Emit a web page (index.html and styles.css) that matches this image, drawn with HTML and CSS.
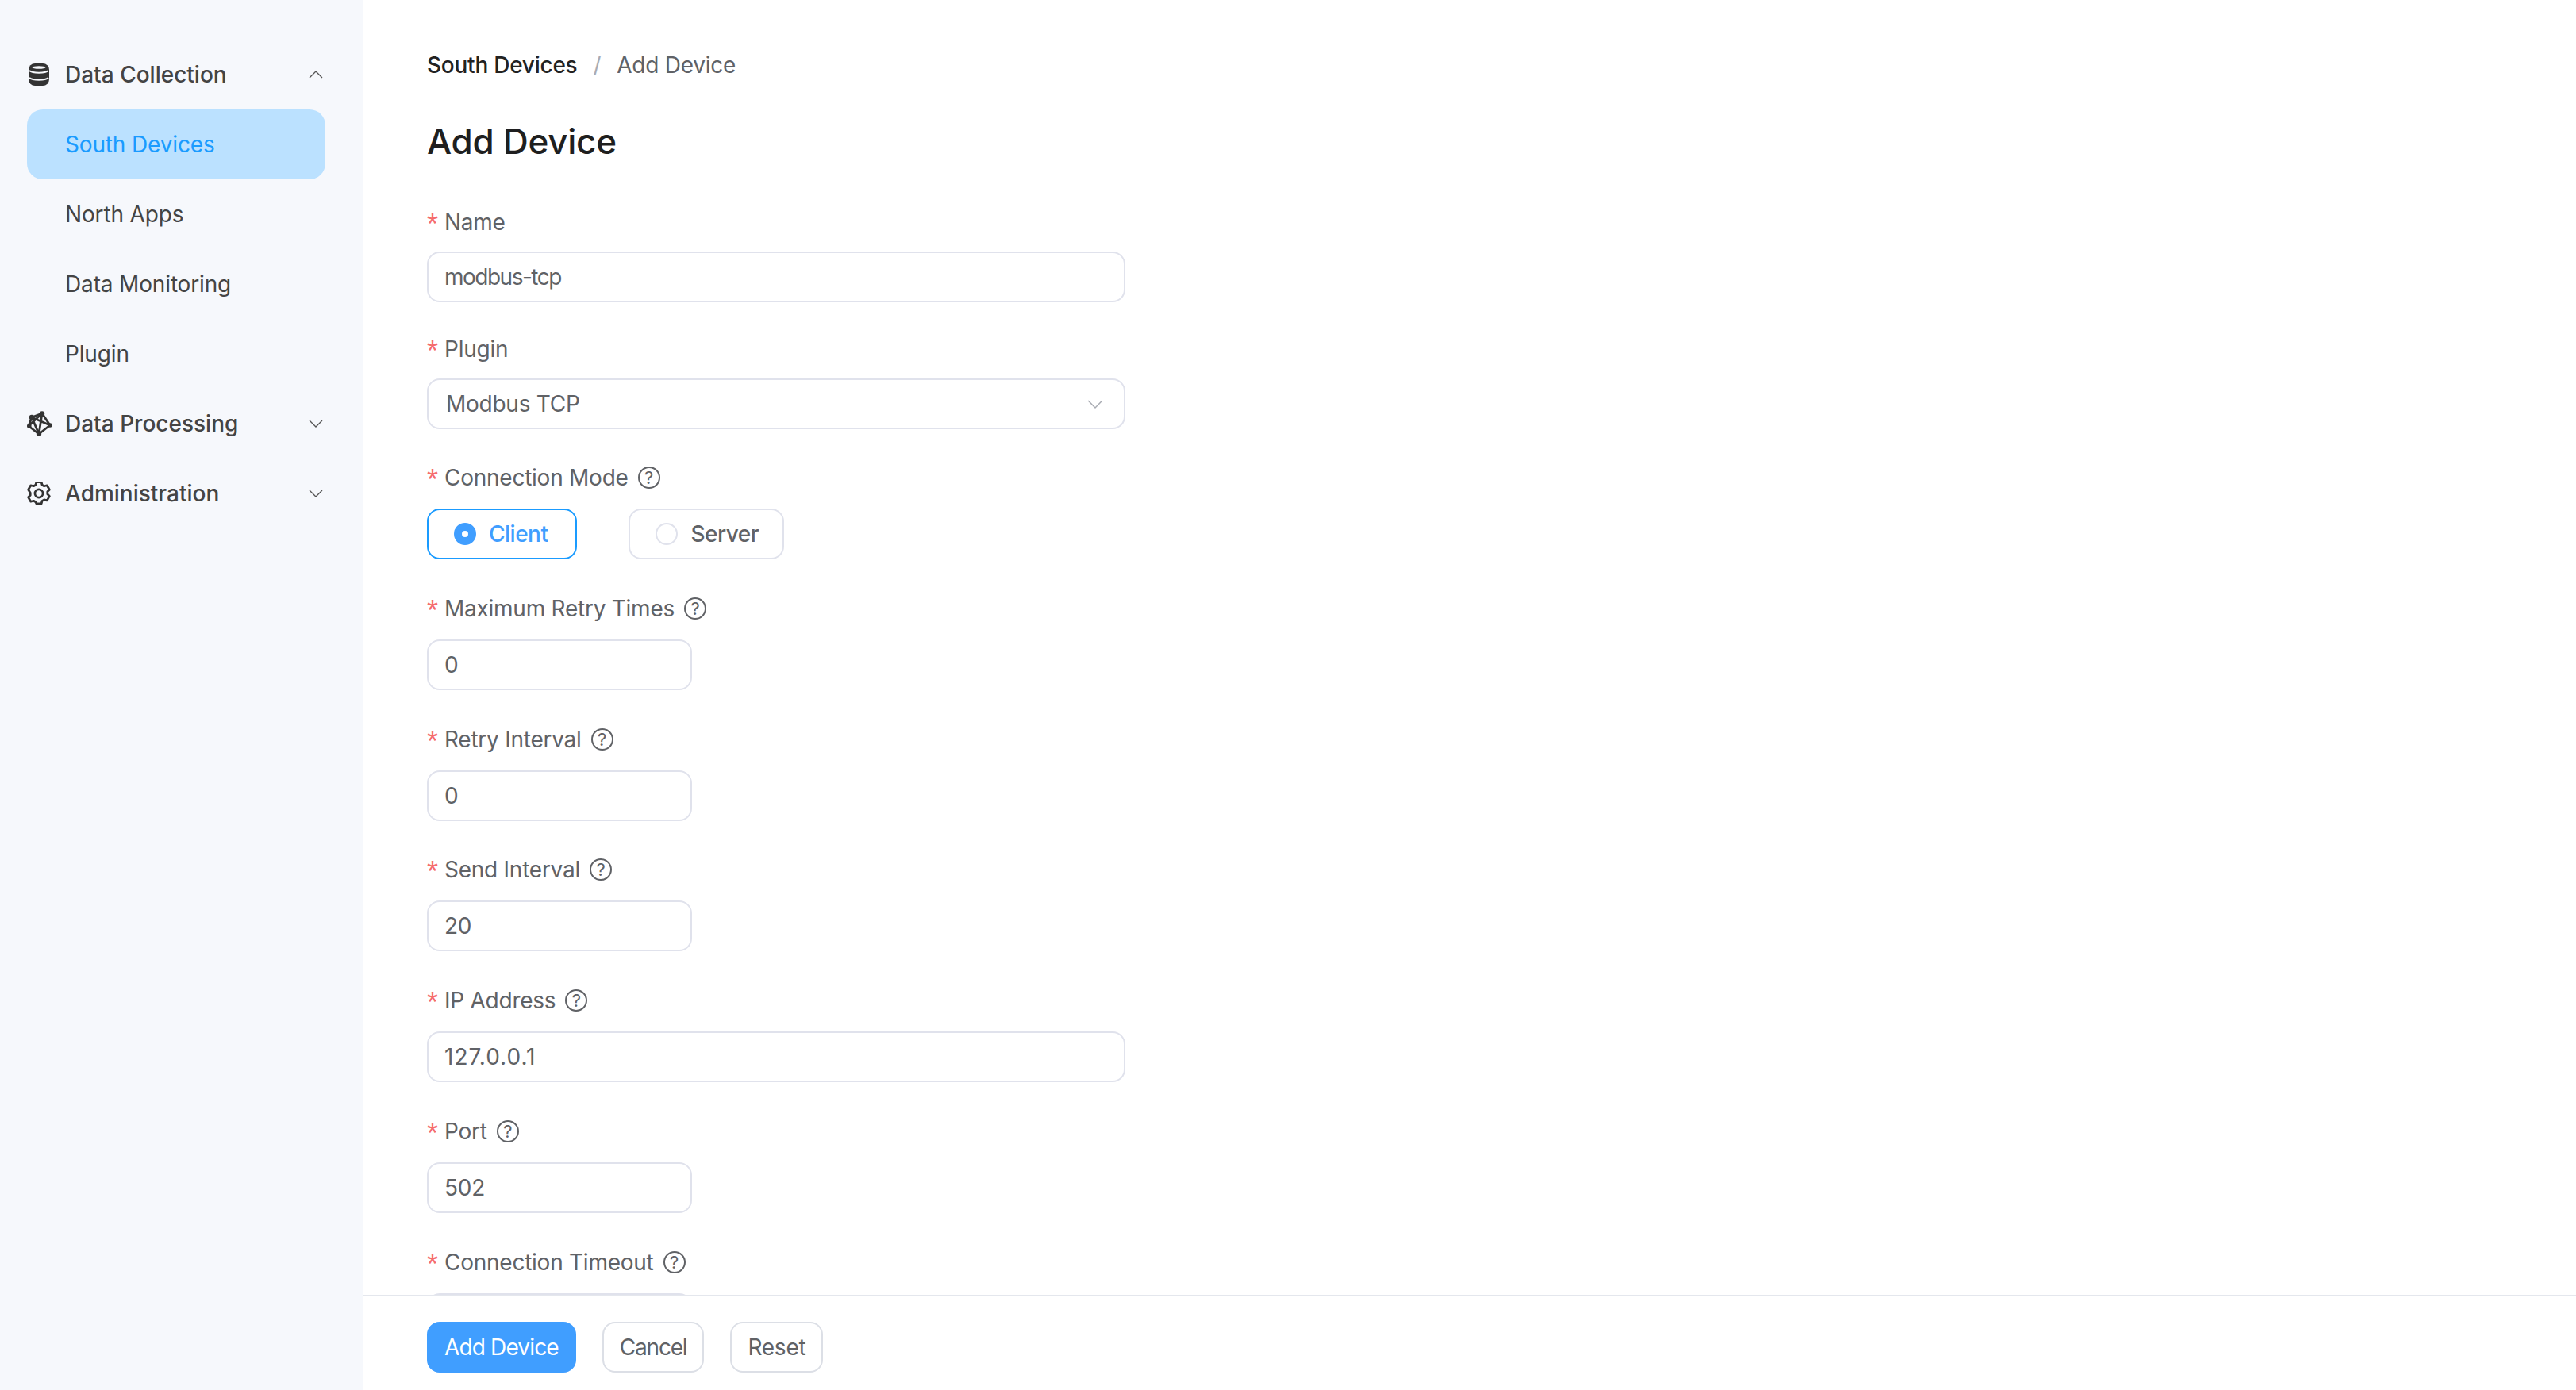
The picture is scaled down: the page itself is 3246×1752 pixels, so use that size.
FILE: index.html
```html
<!DOCTYPE html>
<html lang="en">

<head>
    <meta charset="UTF-8">
    <title>Add Device</title>
    <link rel="stylesheet" href="styles.css">
</head>

<body>
    <aside class="sidebar">
        <div class="menu-title">
            <svg class="menu-icon" viewBox="0 0 28 30"><rect x="1" y="1" width="26" height="28" rx="8" fill="#333"/><g fill="none" stroke="#f6f8fc" stroke-width="2"><path d="M2 10c4 3.500 20 3.500 24 0"/><path d="M2 19c4 3.500 20 3.500 24 0"/></g><ellipse cx="14" cy="6" rx="8.500" ry="1.700" fill="#f6f8fc"/></svg>
            <span class="menu-text">Data Collection</span>
            <svg class="chevron" viewBox="0 0 18 10"><path d="M1 9l8-8 8 8"/></svg>
        </div>
        <div class="menu-item active">South Devices</div>
        <div class="menu-item">North Apps</div>
        <div class="menu-item">Data Monitoring</div>
        <div class="menu-item">Plugin</div>
        <div class="menu-title">
            <svg class="menu-icon wide" viewBox="0 0 32 32"><g fill="none" stroke="#333" stroke-width="2.800" stroke-linejoin="round"><path d="M6 8l13-5 10 15-14 11L2 19z"/><path d="M6 8l9 21M19 3l-4 26M19 3L2 19M6 8l23 10"/></g><g fill="#333"><circle cx="6" cy="8" r="3.200"/><circle cx="19" cy="3.500" r="3.200"/><circle cx="29" cy="18" r="2.800"/><circle cx="15" cy="29" r="3.200"/><circle cx="2.800" cy="19" r="2.800"/></g></svg>
            <span class="menu-text">Data Processing</span>
            <svg class="chevron" viewBox="0 0 18 10"><path d="M1 1l8 8 8-8"/></svg>
        </div>
        <div class="menu-title">
            <svg class="menu-icon" viewBox="1 1 22 22"><g fill="none" stroke="#333" stroke-width="2" stroke-linejoin="round"><path d="M9.700 1.500h4.600l.7 2.600 1.900 1.100 2.600-.7 2.300 4-1.900 1.900v2.200l1.900 1.900-2.300 4-2.600-.7-1.900 1.100-.7 2.600H9.700L9 19.900l-1.900-1.100-2.600.7-2.300-4 1.900-1.900v-2.200L2.200 8.500l2.300-4 2.600.7L9 4.100z"/><circle cx="12" cy="12" r="3.700"/></g></svg>
            <span class="menu-text">Administration</span>
            <svg class="chevron" viewBox="0 0 18 10"><path d="M1 1l8 8 8-8"/></svg>
        </div>
    </aside>

    <main class="main">
        <div class="content">
            <div class="breadcrumb">
                <span class="crumb-link">South Devices</span>
                <span class="crumb-sep">/</span>
                <span>Add Device</span>
            </div>
            <h1 class="page-title">Add Device</h1>

            <div class="field">
                <div class="label"><span class="star">*</span>Name</div>
                <input class="input narrow-text" type="text" value="modbus-tcp">
            </div>
            <div class="field">
                <div class="label"><span class="star">*</span>Plugin</div>
                <div class="input select">Modbus TCP
                    <svg class="select-arrow" viewBox="0 0 18 10"><path d="M1 1l8 8 8-8"/></svg>
                </div>
            </div>
            <div class="field tall">
                <div class="label"><span class="star">*</span>Connection Mode<span class="help">?</span></div>
                <div class="radio-group">
                    <div class="radio checked"><span class="radio-dot"></span>Client</div>
                    <div class="radio"><span class="radio-dot"></span>Server</div>
                </div>
            </div>
            <div class="field tall">
                <div class="label"><span class="star">*</span>Maximum Retry Times<span class="help">?</span></div>
                <input class="input short" type="text" value="0">
            </div>
            <div class="field tall">
                <div class="label"><span class="star">*</span>Retry Interval<span class="help">?</span></div>
                <input class="input short" type="text" value="0">
            </div>
            <div class="field tall">
                <div class="label"><span class="star">*</span>Send Interval<span class="help">?</span></div>
                <input class="input short" type="text" value="20">
            </div>
            <div class="field tall">
                <div class="label"><span class="star">*</span>IP Address<span class="help">?</span></div>
                <input class="input wide-text" type="text" value="127.0.0.1">
            </div>
            <div class="field tall">
                <div class="label"><span class="star">*</span>Port<span class="help">?</span></div>
                <input class="input short" type="text" value="502">
            </div>
            <div class="field tall">
                <div class="label"><span class="star">*</span>Connection Timeout<span class="help">?</span></div>
                <input class="input short" type="text" value="3000">
            </div>
        </div>
        <div class="footer">
            <button class="btn primary">Add Device</button>
            <button class="btn cancel">Cancel</button>
            <button class="btn">Reset</button>
        </div>
    </main>
</body>

</html>
```

FILE: styles.css
```css
* {
    box-sizing: border-box;
}

html,
body {
    height: 100%;
}

body {
    margin: 0;
    display: flex;
    overflow: hidden;
    font-family: Inter, Roboto, sans-serif;
    font-size: 28px;
    color: #606266;
    background: #fff;
}

/* sidebar */
.sidebar {
    width: 458px;
    flex-shrink: 0;
    padding: 50px 48px 0 34px;
    background: #f6f8fc;
}

.menu-title {
    display: flex;
    align-items: center;
    height: 88px;
    font-weight: 500;
    color: #444;
}

.menu-icon {
    width: 30px;
    height: 30px;
    flex-shrink: 0;
}

.menu-icon.wide {
    width: 32px;
    height: 32px;
    margin-right: -2px;
}

.menu-text {
    margin-left: 18px;
    flex: 1;
}

.chevron {
    width: 18px;
    height: 10px;
    fill: none;
    stroke: #555;
    stroke-width: 1.300;
    margin-right: 3px;
}

.menu-item {
    height: 88px;
    line-height: 88px;
    padding-left: 48px;
    color: #444;
    border-radius: 20px;
    letter-spacing: -0.15px;
}

.menu-item.active {
    color: #1a9bff;
    background: #bbe1ff;
}

/* main */
.main {
    flex: 1;
    display: flex;
    flex-direction: column;
    min-width: 0;
    letter-spacing: -0.25px;
}

.content {
    flex: 1;
    min-height: 0;
    overflow: hidden;
    padding: 62px 0 0 80px;
}

.breadcrumb {
    display: flex;
    align-items: center;
    height: 40px;
}

.crumb-link {
    font-weight: 500;
    color: #222;
}

.crumb-sep {
    margin: 0 20px;
    color: #a8abb2;
}

.page-title {
    margin: 46px 0 0;
    height: 60px;
    line-height: 60px;
    font-size: 44px;
    font-weight: 500;
    color: #1f1f1f;
}

.field {
    height: 160px;
}

.page-title + .field {
    margin-top: 44px;
}

.field.tall {
    height: 164.800px;
}

.label {
    display: flex;
    align-items: center;
    height: 65px;
    padding-bottom: 9px;
}

.field.tall .label {
    height: 69px;
}

.star {
    width: 22px;
    height: 28px;
    font-family: "Liberation Sans", sans-serif;
    font-size: 36px;
    line-height: 34px;
    color: #f56c6c;
}

.help {
    width: 28px;
    height: 28px;
    margin-left: 12px;
    border: 2px solid #606266;
    border-radius: 50%;
    font-size: 22px;
    line-height: 24px;
    text-align: center;
}

.input {
    display: block;
    width: 880px;
    height: 64px;
    padding: 0 20px;
    border: 2px solid #e0e2ec;
    border-radius: 16px;
    background: #fff;
    font: inherit;
    letter-spacing: inherit;
    color: #606266;
    outline: none;
}

.input.short {
    width: 334px;
}

.input.narrow-text {
    letter-spacing: -1.500px;
}

.input.wide-text {
    letter-spacing: 1px;
}

.select {
    display: flex;
    align-items: center;
    justify-content: space-between;
    padding: 0 26px 0 22px;
}

.select-arrow {
    width: 20px;
    height: 11px;
    fill: none;
    stroke: #a8abb2;
    stroke-width: 1.300;
}

.radio-group {
    display: flex;
    gap: 65px;
}

.radio {
    display: flex;
    align-items: center;
    height: 64px;
    padding: 0 30px 0 32px;
    border: 2px solid #e0e2ec;
    border-radius: 16px;
    font-weight: 500;
    letter-spacing: -0.5px;
}

.radio-dot {
    width: 28px;
    height: 28px;
    margin-right: 16px;
    border: 2px solid #e0e2ec;
    border-radius: 50%;
}

.radio.checked {
    padding-right: 35px;
    border-color: #1a9bff;
    color: #409eff;
}

.radio.checked .radio-dot {
    border: 10px solid #409eff;
    background: #fff;
}

/* footer */
.footer {
    display: flex;
    gap: 33px;
    flex-shrink: 0;
    height: 120px;
    padding: 32px 0 0 80px;
    border-top: 2px solid #e4e7ed;
    background: #fff;
}

.btn {
    height: 64px;
    padding: 0 20px;
    border: 2px solid #dcdfe6;
    border-radius: 16px;
    background: #fff;
    font: inherit;
    letter-spacing: inherit;
    color: #606266;
}

.btn.primary {
    border-color: #409eff;
    background: #409eff;
    color: #fff;
    letter-spacing: -0.85px;
}

.btn.cancel {
    letter-spacing: -1.200px;
}
```
